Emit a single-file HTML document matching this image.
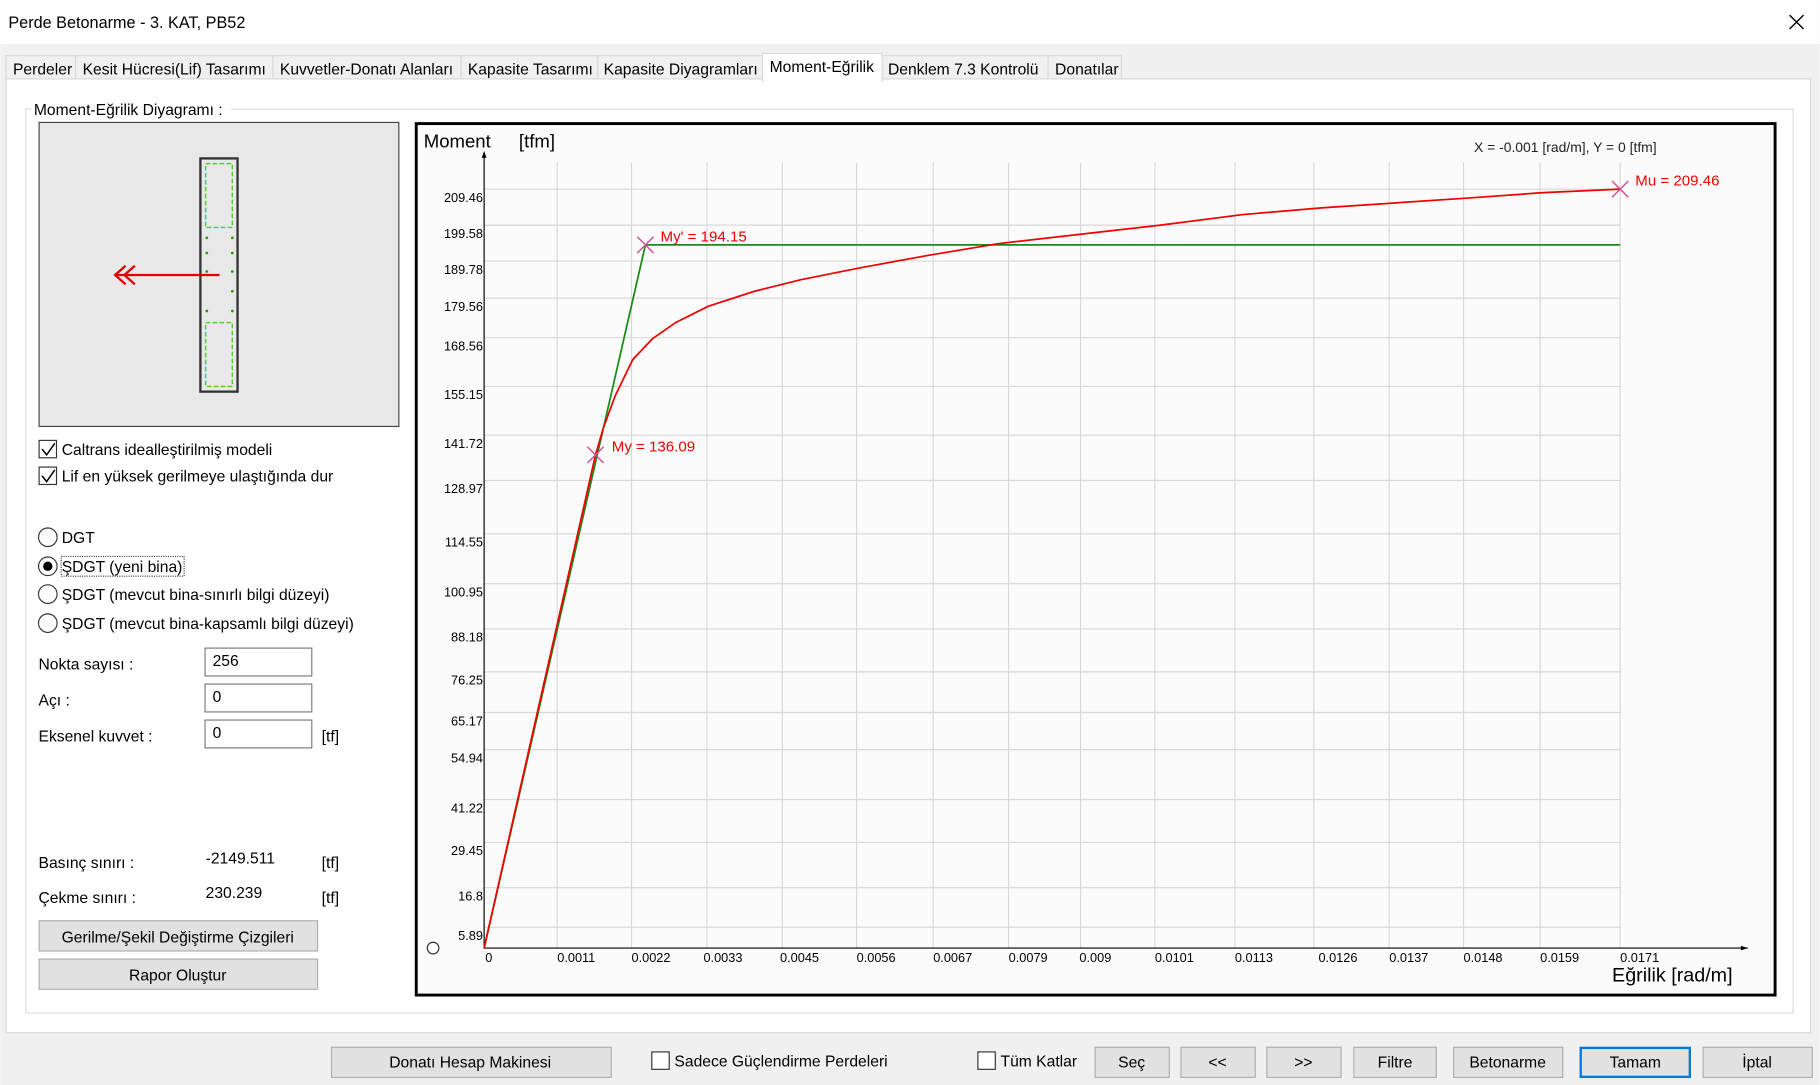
<!DOCTYPE html>
<html><head><meta charset="utf-8"><style>
html,body{margin:0;padding:0;background:#fff;width:1820px;height:1085px;overflow:hidden}
svg{display:block}
text{font-family:"Liberation Sans","DejaVu Sans",sans-serif;fill:#000}
.ui{font-size:13.5px}
.ax{font-size:11px}
</style></head><body>
<svg width="1820" height="1085" viewBox="0 0 1568 935" xmlns="http://www.w3.org/2000/svg">
<rect width="1568" height="935" fill="#f0f0f0"/>
<rect width="1568" height="38" fill="#fff"/>
<text x="7" y="24" style="font-size:14px">Perde Betonarme - 3. KAT, PB52</text>
<path d="M1542 13 L1554 25 M1554 13 L1542 25" stroke="#000" stroke-width="1.2"/>
<g class="ui" fill="#f0f0f0" stroke="#d9d9d9">
<rect x="5" y="48" width="60" height="21"/><rect x="65" y="48" width="170" height="21"/>
<rect x="235" y="48" width="162" height="21"/><rect x="397" y="48" width="118" height="21"/>
<rect x="515" y="48" width="142" height="21"/><rect x="760" y="48" width="143" height="21"/>
<rect x="903" y="48" width="63" height="21"/>
</g>
<rect x="5" y="68" width="1555" height="822" fill="#fff" stroke="#d9d9d9"/>
<rect x="657" y="46" width="103" height="24" fill="#fff" stroke="#d9d9d9"/>
<rect x="658" y="67" width="101" height="4" fill="#fff"/>
<g class="ui">
<text x="11" y="64">Perdeler</text><text x="71" y="64">Kesit Hücresi(Lif) Tasarımı</text>
<text x="241" y="64">Kuvvetler-Donatı Alanları</text><text x="403" y="64">Kapasite Tasarımı</text>
<text x="520" y="64">Kapasite Diyagramları</text><text x="663" y="62">Moment-Eğrilik</text>
<text x="765" y="64">Denklem 7.3 Kontrolü</text><text x="909" y="64">Donatılar</text>
</g>
<rect x="22" y="94" width="1523" height="779" fill="none" stroke="#dcdcdc"/>
<rect x="27" y="86" width="172" height="14" fill="#fff"/>
<text x="29" y="99" class="ui">Moment-Eğrilik Diyagramı :</text>
<rect x="33.5" y="105.5" width="310" height="262" fill="#e8e8e8" stroke="#444"/>
<rect x="172.5" y="136.5" width="32" height="201" fill="none" stroke="#333" stroke-width="2"/>
<rect x="177" y="141" width="23" height="55" fill="none" stroke="#4ccd2a" stroke-width="1.2" stroke-dasharray="4 2"/>
<rect x="177" y="278" width="23" height="55" fill="none" stroke="#4ccd2a" stroke-width="1.2" stroke-dasharray="4 2"/>
<g fill="#2a9a10"><circle cx="178" cy="218" r="1.2"/><circle cx="200" cy="218" r="1.2"/><circle cx="178" cy="234" r="1.2"/><circle cx="200" cy="234" r="1.2"/><circle cx="200" cy="251" r="1.2"/><circle cx="178" cy="268" r="1.2"/><circle cx="200" cy="268" r="1.2"/><circle cx="178" cy="205" r="1.2"/><circle cx="200" cy="205" r="1.2"/></g>
<path d="M189 237 H99 M108 229 L99 237 L108 245 M116 229 L107 237 L116 245" stroke="#e00000" stroke-width="2" fill="none"/>
<g fill="#fff" stroke="#333"><rect x="33.5" y="379.5" width="15" height="15"/><rect x="33.5" y="402.5" width="15" height="15"/></g>
<path d="M36 387 L40 392 L47 382 M36 410 L40 415 L47 405" stroke="#000" fill="none" stroke-width="1.3"/>
<g class="ui"><text x="53" y="392">Caltrans idealleştirilmiş modeli</text><text x="53" y="415">Lif en yüksek gerilmeye ulaştığında dur</text></g>
<g fill="#fff" stroke="#333"><circle cx="41" cy="463" r="8"/><circle cx="41" cy="488" r="8"/><circle cx="41" cy="512" r="8"/><circle cx="41" cy="537" r="8"/></g>
<circle cx="41" cy="488" r="4" fill="#000"/>
<rect x="52.5" y="479.5" width="106" height="17" fill="none" stroke="#444" stroke-dasharray="1 1"/>
<g class="ui"><text x="53" y="468">DGT</text><text x="53" y="493">ŞDGT (yeni bina)</text><text x="53" y="517">ŞDGT (mevcut bina-sınırlı bilgi düzeyi)</text><text x="53" y="542">ŞDGT (mevcut bina-kapsamlı bilgi düzeyi)</text></g>
<g fill="#fff" stroke="#7a7a7a"><rect x="176.5" y="558.5" width="92" height="24"/><rect x="176.5" y="589.5" width="92" height="24"/><rect x="176.5" y="620.5" width="92" height="24"/></g>
<g class="ui"><text x="33" y="577">Nokta sayısı :</text><text x="183" y="574">256</text>
<text x="33" y="608">Açı :</text><text x="183" y="605">0</text>
<text x="33" y="639">Eksenel kuvvet :</text><text x="183" y="636">0</text><text x="277" y="639">[tf]</text>
<text x="33" y="748">Basınç sınırı :</text><text x="177" y="744">-2149.511</text><text x="277" y="748">[tf]</text>
<text x="33" y="778">Çekme sınırı :</text><text x="177" y="774">230.239</text><text x="277" y="778">[tf]</text></g>
<g fill="#e1e1e1" stroke="#adadad"><rect x="33.5" y="793.5" width="240" height="26"/><rect x="33.5" y="826.5" width="240" height="26"/></g>
<g class="ui" text-anchor="middle"><text x="153" y="812">Gerilme/Şekil Değiştirme Çizgileri</text><text x="153" y="845">Rapor Oluştur</text></g>
<rect x="358.5" y="106.5" width="1171" height="751" fill="#fbfbfb" stroke="#000" stroke-width="2.5"/>
<g stroke="#d8d8d8" stroke-width="1">
<path d="M417 163H1396M417 194H1396M417 225H1396M417 257H1396M417 291H1396M417 333H1396M417 375H1396M417 414H1396M417 460H1396M417 503H1396M417 542H1396M417 579H1396M417 614H1396M417 646H1396M417 689H1396M417 726H1396M417 765H1396M417 799H1396"/>
<path d="M480 140V817M544 140V817M609 140V817M674 140V817M738 140V817M804 140V817M869 140V817M931 140V817M995 140V817M1064 140V817M1132 140V817M1197 140V817M1261 140V817M1327 140V817M1396 140V817"/>
</g>
<path d="M417 132V817H1506" stroke="#000" fill="none"/>
<path d="M415 136L417 130L419 136ZM1500 815L1506 817L1500 819Z" fill="#000"/>
<circle cx="373" cy="817" r="5" fill="#fff" stroke="#333"/>
<g class="ax" text-anchor="end">
<text x="416" y="174">209.46</text><text x="416" y="205">199.58</text><text x="416" y="236">189.78</text><text x="416" y="268">179.56</text><text x="416" y="302">168.56</text><text x="416" y="344">155.15</text><text x="416" y="386">141.72</text><text x="416" y="425">128.97</text><text x="416" y="471">114.55</text><text x="416" y="514">100.95</text><text x="416" y="553">88.18</text><text x="416" y="590">76.25</text><text x="416" y="625">65.17</text><text x="416" y="657">54.94</text><text x="416" y="700">41.22</text><text x="416" y="737">29.45</text><text x="416" y="776">16.8</text><text x="416" y="810">5.89</text>
</g>
<g class="ax">
<text x="418" y="829">0</text><text x="480" y="829">0.0011</text><text x="544" y="829">0.0022</text><text x="606" y="829">0.0033</text><text x="672" y="829">0.0045</text><text x="738" y="829">0.0056</text><text x="804" y="829">0.0067</text><text x="869" y="829">0.0079</text><text x="930" y="829">0.009</text><text x="995" y="829">0.0101</text><text x="1064" y="829">0.0113</text><text x="1136" y="829">0.0126</text><text x="1197" y="829">0.0137</text><text x="1261" y="829">0.0148</text><text x="1327" y="829">0.0159</text><text x="1396" y="829">0.0171</text>
</g>
<text x="365" y="127" style="font-size:16px">Moment</text><text x="447" y="127" style="font-size:16px">[tfm]</text>
<text x="1389" y="846" style="font-size:17px">Eğrilik [rad/m]</text>
<text x="1270" y="131" style="font-size:12px;fill:#222">X = -0.001 [rad/m],  Y = 0 [tfm]</text>
<path d="M417 817L556 211H1396" stroke="#1a8a1a" stroke-width="1.5" fill="none"/>
<path d="M417 817L513 392L520 368L530 341L545 310L562 292L582 278L610 264L650 251L690 241L740 231L800 220L860 210L930 202L1000 194L1070 185L1140 179L1200 175L1260 171L1330 166L1396 163" stroke="#f00000" stroke-width="1.5" fill="none"/>
<g stroke="#d0509a" stroke-width="1.3"><path d="M549 204L563 218M563 204L549 218M506 385L520 399M520 385L506 399M1389 156L1403 170M1403 156L1389 170"/></g>
<text x="569" y="208" style="fill:#f00000;font-size:13px">My' = 194.15</text><text x="527" y="389" style="fill:#f00000;font-size:13px">My = 136.09</text><text x="1409" y="160" style="fill:#f00000;font-size:13px">Mu = 209.46</text>
<g fill="#e1e1e1" stroke="#adadad">
<rect x="285.5" y="902.5" width="241" height="26"/><rect x="943.5" y="902.5" width="64" height="26"/><rect x="1017.5" y="902.5" width="64" height="26"/><rect x="1091.5" y="902.5" width="64" height="26"/><rect x="1166.5" y="902.5" width="71" height="26"/><rect x="1252.5" y="902.5" width="94" height="26"/><rect x="1467.5" y="902.5" width="94" height="26"/></g>
<rect x="1362" y="903" width="94" height="25" fill="#e1e1e1" stroke="#0078d7" stroke-width="2"/>
<g fill="#fff" stroke="#333"><rect x="561.5" y="906.5" width="15" height="15"/><rect x="842.5" y="906.5" width="15" height="15"/></g>
<g class="ui"><text x="581" y="919">Sadece Güçlendirme Perdeleri</text><text x="862" y="919">Tüm Katlar</text></g>
<g class="ui" text-anchor="middle"><text x="405" y="920">Donatı Hesap Makinesi</text><text x="975" y="920">Seç</text><text x="1049" y="920">&lt;&lt;</text><text x="1123" y="920">&gt;&gt;</text><text x="1202" y="920">Filtre</text><text x="1299" y="920">Betonarme</text><text x="1409" y="920">Tamam</text><text x="1514" y="920">İptal</text></g>
</svg>
</body></html>
